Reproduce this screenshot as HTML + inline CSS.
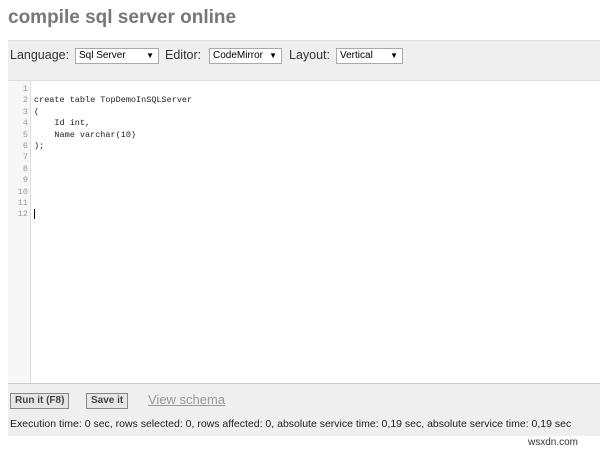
<!DOCTYPE html>
<html><head><style>
body{margin:0;width:600px;height:449px;background:#fff;font-family:"Liberation Sans",sans-serif;position:relative;overflow:hidden}
.t{position:absolute;left:8px;top:7px;font-size:19px;font-weight:bold;color:#777}
.bar{position:absolute;left:8px;top:40px;width:592px;height:40px;background:#efefef;border-top:1px solid #ddd}
.bar span{position:absolute;top:7px;font-size:12.5px;color:#333}
.sel{position:absolute;top:7px;height:14px;border:1px solid #aaa;background:#fff;font-size:10px;line-height:14px;padding-left:3px;box-sizing:content-box}
.sel b{position:absolute;right:4px;font-weight:normal;font-size:8px}
.ed{position:absolute;left:8px;top:80px;width:592px;height:303px;background:#fff;border-top:1px solid #ddd}
.gut{position:absolute;left:0;top:0;width:22px;height:303px;background:#f7f7f7;border-right:1px solid #ddd}
.ln{position:absolute;left:0;top:3px;width:20px;text-align:right;font:8.5px/11.4px "Liberation Mono",monospace;color:#999}
.code{position:absolute;left:26px;top:3px;font:8.5px/11.4px "Liberation Mono",monospace;color:#222;white-space:pre}
.bot{position:absolute;left:8px;top:383px;width:592px;height:52px;background:#efefef;border-top:1px solid #ccc}
.btn{position:absolute;top:9px;height:14px;border:1px solid #888;background:#e6e6e6;font-size:10px;font-weight:bold;color:#444;line-height:14px;padding:0 4px}
</style></head><body>
<div class="t">compile sql server online</div>
<div class="bar">
<span style="left:2px">Language:</span>
<div class="sel" style="left:67px;width:79px">Sql Server<b>▼</b></div>
<span style="left:157px">Editor:</span>
<div class="sel" style="left:201px;width:68px">CodeMirror<b>▼</b></div>
<span style="left:281px">Layout:</span>
<div class="sel" style="left:328px;width:62px">Vertical<b>▼</b></div>
</div>
<div class="ed"><div class="gut"></div>
<div class="ln">1<br>2<br>3<br>4<br>5<br>6<br>7<br>8<br>9<br>10<br>11<br>12</div>
<div class="code"> 
create table TopDemoInSQLServer
(
    Id int,
    Name varchar(10)
);





<span style="border-left:1px solid #000"> </span></div>
</div>
<div class="bot">
<div class="btn" style="left:2px">Run it (F8)</div>
<div class="btn" style="left:78px">Save it</div>
<span style="position:absolute;left:140px;top:8px;font-size:13px;color:#999;text-decoration:underline">View schema</span>
<span style="position:absolute;left:2px;top:34px;font-size:10.5px;color:#222">Execution time: 0 sec, rows selected: 0, rows affected: 0, absolute service time: 0,19 sec, absolute service time: 0,19 sec</span>
</div>
<span style="position:absolute;left:528px;top:437px;font-size:10px;color:#333">wsxdn.com</span>
</body></html>
